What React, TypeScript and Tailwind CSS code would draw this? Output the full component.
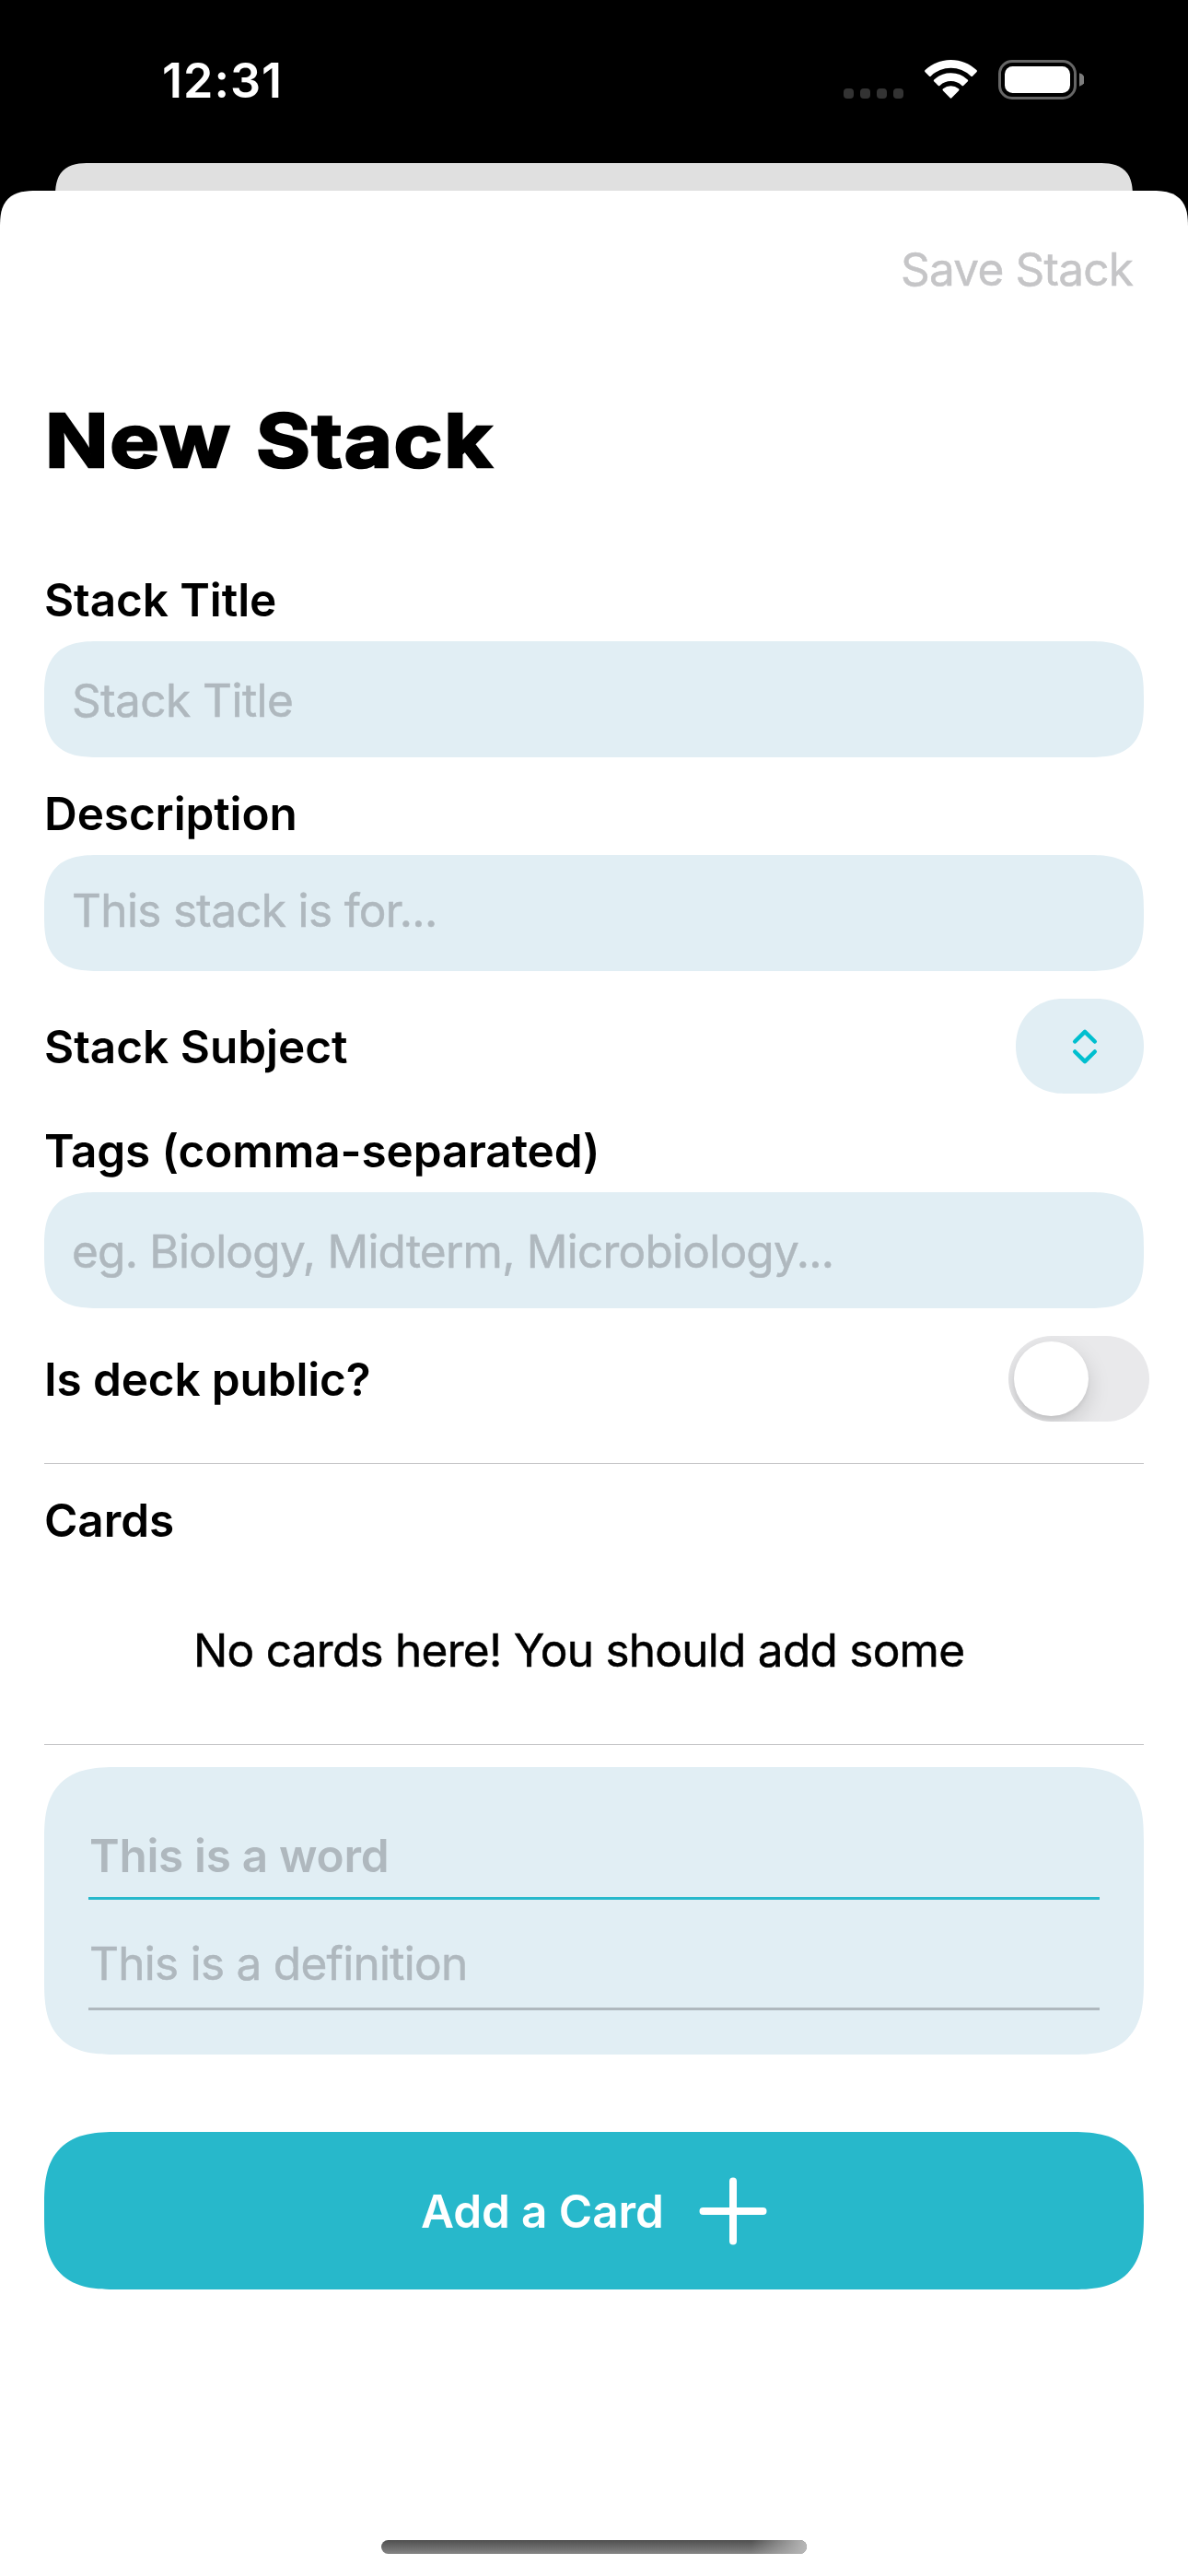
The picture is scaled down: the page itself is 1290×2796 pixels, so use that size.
import type { ReactNode } from "react";

const SQUIRCLE_SM = "rounded-[60px] [corner-shape:superellipse(1.48)]";
const SQUIRCLE_LG = "rounded-[80px] [corner-shape:superellipse(1.48)]";

function StatusBar() {
  return (
    <div className="flex h-[177px] shrink-0 items-start justify-between pl-[176px] pr-[113px] text-white">
      <span className="mt-[58px] text-[52px] font-semibold leading-[60px] tracking-[1px]">12:31</span>
      <div className="mt-[65px] flex items-start">
        <div className="mt-[31px] flex gap-[7px]">
          {[0, 1, 2, 3].map((i) => (
            <span key={i} className="h-[11px] w-[11px] rounded-[4px] bg-[#333333]" />
          ))}
        </div>
        <svg className="ml-[23px]" width="57" height="42" viewBox="0 0 57 42" fill="#fff">
          <path d="M28.5 0C39.3 0 49.2 4.200 56.400 11.100A1.500 1.500 0 0 1 56.400 13.200L52.200 17.400A1.500 1.500 0 0 1 50.100 17.400A31.300 31.300 0 0 0 6.900 17.400A1.500 1.500 0 0 1 4.800 17.400L0.600 13.200A1.500 1.500 0 0 1 0.600 11.100C7.800 4.200 17.700 0 28.500 0Z" />
          <path d="M28.5 14.200A26.400 26.400 0 0 1 46.700 21.400A1.500 1.500 0 0 1 46.700 23.500L42.400 27.700A1.500 1.500 0 0 1 40.300 27.700A17.500 17.500 0 0 0 16.700 27.700A1.500 1.500 0 0 1 14.600 27.700L10.300 23.500A1.500 1.500 0 0 1 10.300 21.400A26.400 26.400 0 0 1 28.500 14.200Z" />
          <path d="M28.500 28.200A13.300 13.300 0 0 1 36.900 31.200A1.500 1.500 0 0 1 37 33.400L29.600 41.100A1.500 1.500 0 0 1 27.400 41.100L20 33.400A1.500 1.500 0 0 1 20.100 31.200A13.300 13.300 0 0 1 28.500 28.200Z" />
        </svg>
        <svg className="ml-[23px]" width="93" height="43" viewBox="0 0 93 43">
          <rect x="1.500" y="1.500" width="82" height="40" rx="13.500" fill="none" stroke="#666" strokeWidth="3" />
          <rect x="7" y="7" width="71" height="29" rx="8.500" fill="#fff" />
          <path d="M88 14.200A7.500 7.500 0 0 1 88 28.800Z" fill="#7d7d7d" />
        </svg>
      </div>
    </div>
  );
}

function Label({ children, tracking }: { children: ReactNode; tracking: string }) {
  return (
    <h2 className={`text-[49.5px] font-semibold leading-[60px] whitespace-nowrap text-black ${tracking}`}>
      {children}
    </h2>
  );
}

function Field({ placeholder, style }: { placeholder: string; style: string }) {
  return (
    <div
      className={`mt-[15px] h-[126px] pl-[30px] text-[49.5px] leading-[60px] whitespace-nowrap text-[#afb8be] [-webkit-text-stroke:0.5px_#afb8be] bg-[#e1eef4] ${SQUIRCLE_SM} ${style}`}
    >
      {placeholder}
    </div>
  );
}

export default function App() {
  return (
    <div className="flex h-[2796px] w-[1290px] flex-col overflow-hidden bg-black font-['Inter',sans-serif]">
      <StatusBar />
      {/* top edge of the presenting screen, stacked behind the sheet */}
      <div className="mx-[60px] -mb-[30px] h-[60px] shrink-0 rounded-t-[38px] bg-[#e0e0e0] [corner-shape:superellipse(1.48)]" />
      <main className="relative flex grow flex-col rounded-t-[40px] bg-white px-12 [corner-shape:superellipse(1.48)]">
        <button className="mt-[55px] mr-[12px] self-end text-[49.5px] leading-[60px] tracking-[-0.8px] text-[#c5c5c7] [-webkit-text-stroke:0.5px_#c5c5c7]">
          Save Stack
        </button>
        <h1 className="mt-[107px] ml-px origin-left scale-x-[1.125] self-start text-[80px] font-bold leading-[98px] tracking-[1.5px] whitespace-nowrap [word-spacing:3px] text-black [-webkit-text-stroke:2.5px_black]">
          New Stack
        </h1>

        <div className="mt-[94px]">
          <Label tracking="tracking-[-0.1px]">Stack Title</Label>
          <Field placeholder="Stack Title" style="pt-[34px] tracking-[-0.55px]" />
        </div>
        <div className="mt-[31px]">
          <Label tracking="tracking-[-0.11px]">Description</Label>
          <Field placeholder="This stack is for..." style="pt-[30px] tracking-[-0.67px]" />
        </div>
        <div className="mt-[30px] flex h-[103px] items-center justify-between">
          <Label tracking="tracking-[-0.02px]">Stack Subject</Label>
          <button className="flex h-[103px] w-[139px] items-center rounded-[51.5px] bg-[#e1eef4] pl-[61px] [corner-shape:superellipse(1.08)]">
            <svg width="28" height="40" viewBox="0 0 28 40" fill="none" stroke="#00bfcf" strokeWidth="4.5" strokeLinecap="round" strokeLinejoin="round">
              <path d="M3.200 14.500L14 3.800L24.800 14.500M3.200 25.500L14 36.200L24.800 25.500" />
            </svg>
          </button>
        </div>
        <div className="mt-[32px]">
          <Label tracking="tracking-[-0.11px]">Tags (comma-separated)</Label>
          <Field placeholder="eg. Biology, Midterm, Microbiology..." style="pt-[34px] tracking-[-0.76px]" />
        </div>
        <div className="mt-[30px] -mr-[6px] flex h-[93px] items-center justify-between">
          <Label tracking="tracking-[-0.15px]">Is deck public?</Label>
          <div className="h-[93px] w-[153px] overflow-hidden rounded-[46.5px] bg-[#e9e9eb] p-[6px]">
            <div className="h-[81px] w-[81px] rounded-full bg-white shadow-[0_9px_24px_rgba(0,0,0,0.15),0_3px_4px_rgba(0,0,0,0.06)]" />
          </div>
        </div>

        <hr className="mt-[45px] h-px shrink-0 border-0 bg-[#c6c6c8]" />
        <div className="mt-[31px]">
          <Label tracking="tracking-[-0.1px]">Cards</Label>
        </div>
        <p className="mt-[81px] pl-[162px] text-[49.5px] leading-[60px] tracking-[-0.73px] whitespace-nowrap text-black [-webkit-text-stroke:0.5px_black]">
          No cards here! You should add some
        </p>
        <hr className="mt-[72px] h-px shrink-0 border-0 bg-[#c6c6c8]" />

        <section className={`mt-[24px] h-[312px] bg-[#e1eef4] px-12 pt-[66px] text-[49.5px] leading-[60px] text-[#afb8be] ${SQUIRCLE_LG}`}>
          <div className="h-[78px] border-b-[3px] border-[#27b8cb] pl-px font-semibold tracking-[-0.3px]">This is a word</div>
          <div className="mt-[39px] h-[81px] border-b-[3px] border-[#afb8be] pl-px tracking-[-0.72px] [-webkit-text-stroke:0.5px_#afb8be]">
            This is a definition
          </div>
        </section>

        <button className={`mt-[84px] flex h-[171px] items-center bg-[#27b8cb] pl-[409px] text-[49.5px] font-semibold leading-[60px] tracking-[-0.1px] text-white ${SQUIRCLE_LG}`}>
          Add a Card
          <svg className="ml-[38px]" width="74" height="74" viewBox="0 0 74 74" stroke="#fff" strokeWidth="8" strokeLinecap="round">
            <path d="M37 4.500V69.500M4.500 37H69.500" />
          </svg>
        </button>

        <div className="mt-auto mb-[24px] flex h-[15px] w-[462px] justify-end self-center overflow-hidden rounded-full bg-linear-to-b from-[#4f4f4f] to-[#858585]">
          <div className="h-full w-[60px] bg-linear-to-r from-transparent to-[#b8b8b8]" />
        </div>
      </main>
    </div>
  );
}
